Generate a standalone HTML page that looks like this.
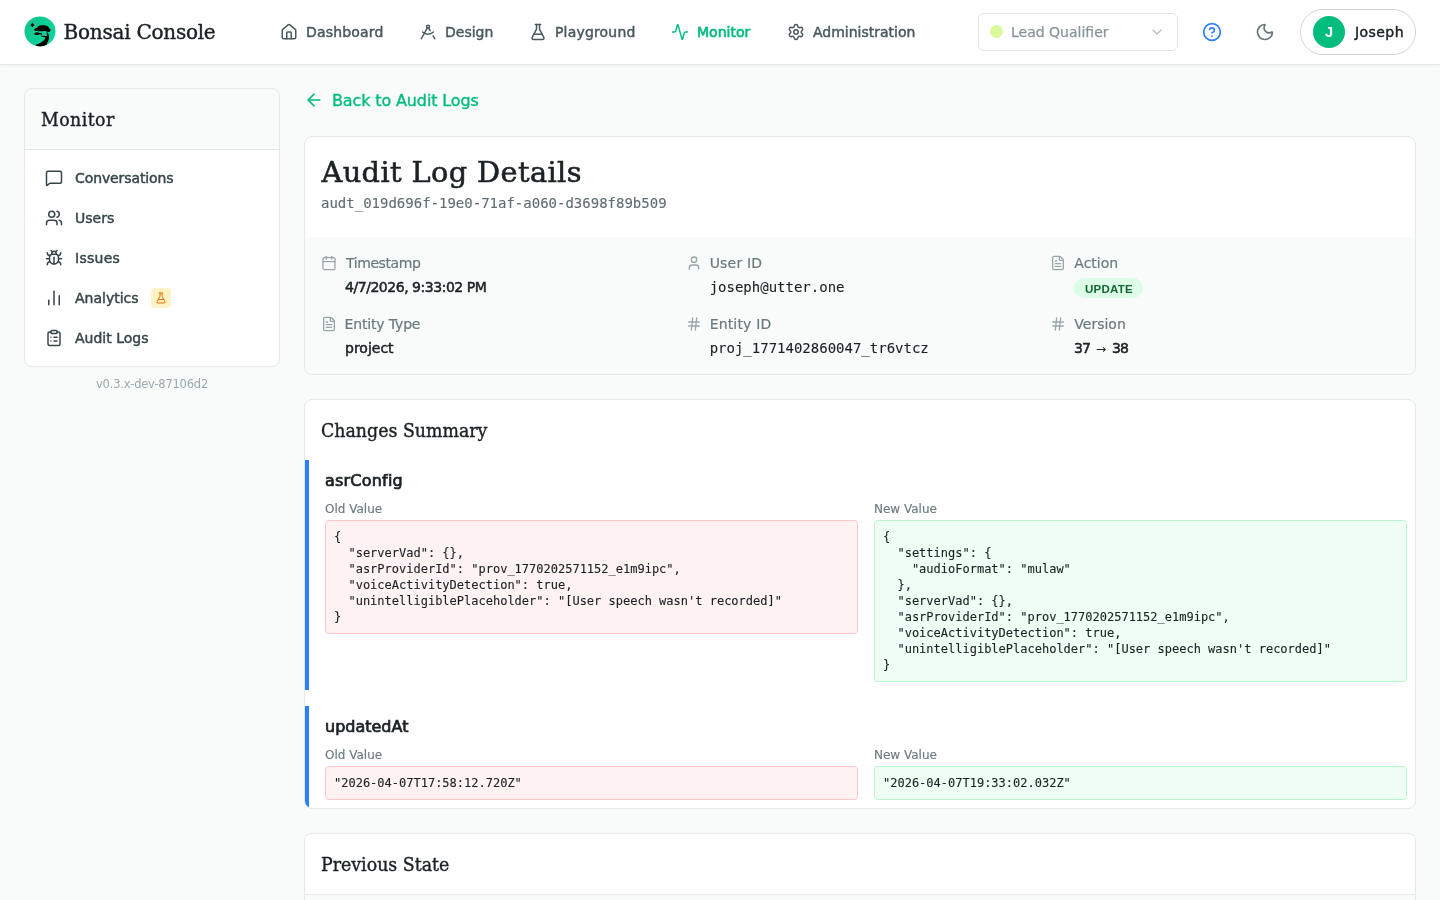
<!DOCTYPE html>
<html lang="en">
<head>
<meta charset="utf-8">
<title>Bonsai Console – Audit Log Details</title>
<style>
*{box-sizing:border-box;margin:0;padding:0}
html,body{width:1440px;height:900px;overflow:hidden;font-family:"DejaVu Sans","Liberation Sans",sans-serif}
body{background:#f9fbfb;font-family:"DejaVu Sans","Liberation Sans",sans-serif;color:#1b2124;position:relative;-webkit-font-smoothing:antialiased}
svg{display:block;fill:none;stroke:currentColor;stroke-width:2;stroke-linecap:round;stroke-linejoin:round}
#app{position:absolute;left:0;top:0;width:1440px;height:900px;overflow:hidden;will-change:transform;background:#f9fbfb}
.t{position:absolute;white-space:pre;line-height:20px}
.serif{-webkit-text-stroke:.4px currentColor;font-family:"DejaVu Serif","Liberation Serif",serif}
.mono{-webkit-text-stroke:.12px currentColor !important;font-family:"DejaVu Sans Mono","Liberation Mono",monospace}

/* header */
#hdr{position:absolute;left:0;top:0;width:1440px;height:65px;background:#fff;border-bottom:1px solid #e4e7e8;box-shadow:0 1px 2px rgba(16,24,40,.05)}
#logo{position:absolute;left:24px;top:16px;width:32px;height:32px}
#brand{left:63.6px;top:16px;font-size:20px;letter-spacing:-.25px;line-height:32px;color:#1b2124}
.nav{position:absolute;top:0;height:64px;color:#4a595d;font-size:14px}
.nav svg{position:absolute;left:0;top:23px;width:18px;height:18px}
.nav span{-webkit-text-stroke:.45px currentColor;font-size:13.500px;transform:scaleX(1.037);transform-origin:0 50%;position:absolute;left:26px;top:22px;line-height:20px;white-space:pre}
.nav.on{color:#00bc7d}
.nav.on span{-webkit-text-stroke:.6px currentColor}
#sel{position:absolute;left:978px;top:13px;width:200px;height:38px;border:1px solid #e1e5e8;border-radius:6px;background:#fff}
#sel i{position:absolute;left:11px;top:11px;width:13px;height:13px;border-radius:50%;background:#d9f99d}
#sel span{-webkit-text-stroke:.25px currentColor;transform:scaleX(1.03);transform-origin:0 50%;position:absolute;left:32px;top:8px;font-size:13.600px;line-height:20px;color:#8a9598;white-space:pre}
#sel svg{position:absolute;left:170px;top:10px;width:16px;height:16px;color:#b7c0c3;stroke-width:2}
#help{position:absolute;left:1202px;top:22px;width:20px;height:20px;color:#2b7fff}
#moon{position:absolute;left:1255px;top:22px;width:20px;height:20px;color:#66757a}
#user{position:absolute;left:1300px;top:9px;width:116px;height:46px;border:1px solid #d1d5dc;border-radius:23px;background:#fff}
#user b{position:absolute;left:12px;top:6px;width:32px;height:32px;border-radius:50%;background:#00bc7d;color:#fff;font-size:14.5px;line-height:33px;text-align:center;font-weight:700;font-family:'Liberation Sans',sans-serif}
#user>span{-webkit-text-stroke:.45px currentColor;transform:scaleX(1.037);transform-origin:0 50%;letter-spacing:.42px;position:absolute;left:54px;top:12px;font-size:13.500px;line-height:20px;color:#1b2124;white-space:pre}

/* sidebar */
#side{position:absolute;left:24px;top:88px;width:256px;height:279px;border:1px solid #e3e8e9;border-radius:8px;background:#fff;overflow:hidden}
#side .hd{height:61px;border-bottom:1px solid #e3e8e9;background:#f9fbfb;position:relative}
#side .hd span{position:absolute;left:15.500px;top:17px;font-size:18.400px;transform:scaleX(.945);transform-origin:0 50%;letter-spacing:.45px;line-height:28px;white-space:pre}
.si{position:absolute;left:8px;width:238px;height:40px;color:#374649;font-size:14px}
.si svg{position:absolute;left:12px;top:11px;width:18px;height:18px}
.si span{-webkit-text-stroke:.45px currentColor;font-size:13.500px;transform:scaleX(1.037);transform-origin:0 50%;position:absolute;left:42px;top:10px;line-height:20px;white-space:pre}
#beta{position:absolute;left:118px;top:10px;width:20px;height:20px;border-radius:4px;background:#fef3c6;color:#e17100}
#beta svg{left:4px;top:4px;width:12px;height:12px}
#ver{left:24px;top:374px;width:256px;text-align:center;font-size:11.500px;line-height:20px;color:#9ca8ab;letter-spacing:-.22px}

/* main */
#back{position:absolute;left:304px;top:89px;height:24px;color:#00bc7d;font-size:16px}
#back svg{position:absolute;left:0;top:1px;width:20px;height:20px}
#back span{-webkit-text-stroke:.35px currentColor;letter-spacing:-.12px;font-size:15.700px;transform:scaleX(1.019);transform-origin:0 50%;position:absolute;left:28.300px;top:0;line-height:24px;white-space:pre}
.card{position:absolute;left:304px;width:1112px;border:1px solid #e3e8e9;border-radius:8px;background:#fff;overflow:hidden}
#c1{top:136px;height:239px}
#c1 h1{-webkit-text-stroke:.6px currentColor;position:absolute;left:16.5px;top:16.5px;font-size:28.8px;letter-spacing:.38px;line-height:36px;font-weight:400;white-space:pre;color:#1b2124}
#c1 .id{position:absolute;left:16px;top:56px;font-size:14px;line-height:20px;color:#5f6d71;white-space:pre}
#meta{position:absolute;left:0;top:100px;width:1110px;height:137px;background:#f9fbfb;border-radius:8px}
.cell{position:absolute;width:348px;height:44px}
.cell svg{position:absolute;left:0;top:2px;width:16px;height:16px;color:#9aa6a9}
.cell .l{-webkit-text-stroke:.2px currentColor;position:absolute;left:24px;top:0;font-size:14px;line-height:20px;color:#6b7a7e;white-space:pre}
.cell .v{-webkit-text-stroke:.5px currentColor;position:absolute;left:24px;top:24px;font-size:14px;line-height:20px;color:#1b2124;white-space:pre}
.cell .s{font-size:13.500px;transform:scaleX(1.037);transform-origin:0 50%}
.badge{position:absolute;left:24px;top:25px;height:20px;width:69px;border-radius:10px;background:#dcfce7;color:#166534;font-size:11.5px;line-height:22px;letter-spacing:.25px;text-indent:.25px;text-align:center;font-weight:700;font-family:"Liberation Sans","DejaVu Sans",sans-serif}

#c2{top:399px;height:410px}
h2{position:absolute;left:16px;font-size:18.400px;transform:scaleX(.945);transform-origin:0 50%;line-height:28px;font-weight:400;white-space:pre;color:#1b2124}
.chg{position:absolute;left:0;width:1110px;border-left:4px solid #2b7fff}
.chg h3{-webkit-text-stroke:.7px currentColor;transform:scaleX(1.053);transform-origin:0 50%;position:absolute;left:16px;top:9px;font-size:15.200px;line-height:24px;font-weight:400;white-space:pre;color:#1b2124}
.chg .lb{-webkit-text-stroke:.15px currentColor;position:absolute;top:41px;font-size:12px;line-height:16px;color:#6b7a7e;white-space:pre}
.chg pre{position:absolute;top:60px;width:533px;border:1px solid;border-radius:3.500px;padding:8px;font-size:12px;line-height:16px;color:#1b2124;white-space:pre;overflow:hidden}
.old{left:16px}.new{left:565px}
pre.old{background:#fef2f2;border-color:#ffc9c9}
pre.new{background:#f0fdf4;border-color:#b9f8cf}
#c3{top:833px;height:200px;background:#f9fbfb}
#c3 .hd{position:absolute;left:0;top:0;width:1110px;height:61px;border-bottom:1px solid #e3e8e9;background:#fff}
</style>
</head>
<body>
<div id="app">
<div id="hdr">
  <svg id="logo" viewBox="0 0 32 32" style="stroke:none"><defs><linearGradient id="lg" x1="0" y1="0.2" x2="1" y2="0.8"><stop offset="0" stop-color="#14c38a"/><stop offset="1" stop-color="#06d8a2"/></linearGradient><clipPath id="lc"><ellipse cx="16" cy="15.600" rx="15.500" ry="15.100"/></clipPath></defs><ellipse cx="16" cy="15.400" rx="15.500" ry="14.900" fill="url(#lg)"/><g fill="#000" clip-path="url(#lc)"><path d="M8.400 6.500Q9.100 8.200 10.600 8.900Q9.100 9.600 8.400 11.300Q7.700 9.600 6.300 8.900Q7.700 8.200 8.400 6.500Z"/><path d="M10.200 13.600C11 12.400 12.500 11.800 13.500 11.500C13.600 10.200 15 9.500 17 9.300C19 9.100 22 9.200 23.500 10C24.600 10.600 24.900 11.500 25 12.300C26 12.800 26.800 13.500 26.700 14.200C26.500 15.500 25.500 16 24.300 15.900C23.500 15.500 22.500 15 21 14.900C18 15 15 15.200 13 15.100C11.500 15.100 9.900 14.800 10.200 13.600Z"/><path d="M10.200 17.800C10.800 16.800 12.200 16.100 13.400 16.200C14.200 16.600 15.500 17 16.900 17.100C17.800 17.300 18.400 17.800 18.100 18.500C17.500 19 16.500 18.300 15.600 18.200C14.800 18.400 14.300 18.900 13.500 19C12.400 19.200 10.600 19.300 10.200 17.800Z"/><path d="M22.400 15.500C23.800 16.600 24.700 18 25 20C25.200 21.800 25 23.500 24 25.200C23.400 26.300 23 27.300 22.800 28.500C20 30.800 14.500 31 11.300 29.200C13.500 28 16.500 27 18.500 25.500C20 24.300 21 23 21.800 21.500L17 20.400L17.300 19.800L22.800 19.900C23 18.500 22.900 17 22.400 15.500Z"/></g></svg>
  <span class="t serif" id="brand">Bonsai Console</span>
  <div class="nav" style="left:280px"><svg viewBox="0 0 24 24"><path d="M15 21v-8a1 1 0 0 0-1-1h-4a1 1 0 0 0-1 1v8"/><path d="M3 10a2 2 0 0 1 .709-1.528l7-5.999a2 2 0 0 1 2.582 0l7 5.999A2 2 0 0 1 21 10v9a2 2 0 0 1-2 2H5a2 2 0 0 1-2-2z"/></svg><span style="letter-spacing:.17px">Dashboard</span></div>
  <div class="nav" style="left:419px"><svg viewBox="0 0 24 24"><path d="m12.990 6.740 1.930 3.440"/><path d="M19.136 12a10 10 0 0 1-14.271 0"/><path d="m21 21-2.160-3.840"/><path d="m3 21 8.020-14.260"/><circle cx="12" cy="5" r="2"/></svg><span>Design</span></div>
  <div class="nav" style="left:529px"><svg viewBox="0 0 24 24"><path d="M14 2v6a2 2 0 0 0 .245.960l5.510 10.080A2 2 0 0 1 18 22H6a2 2 0 0 1-1.755-2.960l5.510-10.080A2 2 0 0 0 10 8V2"/><path d="M6.453 15h11.094"/><path d="M8.500 2h7"/></svg><span style="letter-spacing:.17px">Playground</span></div>
  <div class="nav on" style="left:671px"><svg viewBox="0 0 24 24"><path d="M22 12h-2.480a2 2 0 0 0-1.930 1.460l-2.350 8.360a.25.25 0 0 1-.480 0L9.240 2.180a.25.25 0 0 0-.480 0l-2.350 8.360A2 2 0 0 1 4.490 12H2"/></svg><span>Monitor</span></div>
  <div class="nav" style="left:787px"><svg viewBox="0 0 24 24"><path d="M9.671 4.136a2.340 2.340 0 0 1 4.659 0 2.340 2.340 0 0 0 3.319 1.915 2.340 2.340 0 0 1 2.330 4.033 2.340 2.340 0 0 0 0 3.831 2.340 2.340 0 0 1-2.330 4.033 2.340 2.340 0 0 0-3.319 1.915 2.340 2.340 0 0 1-4.659 0 2.340 2.340 0 0 0-3.320-1.915 2.340 2.340 0 0 1-2.330-4.033 2.340 2.340 0 0 0 0-3.831A2.340 2.340 0 0 1 6.350 6.051a2.340 2.340 0 0 0 3.319-1.915"/><circle cx="12" cy="12" r="3"/></svg><span>Administration</span></div>
  <div id="sel"><i></i><span>Lead Qualifier</span><svg viewBox="0 0 24 24"><path d="m6 9 6 6 6-6"/></svg></div>
  <svg id="help" viewBox="0 0 24 24"><circle cx="12" cy="12" r="10"/><path d="M9.090 9a3 3 0 0 1 5.830 1c0 2-3 3-3 3"/><path d="M12 17h.01"/></svg>
  <svg id="moon" viewBox="0 0 24 24"><path d="M20.985 12.486a9 9 0 1 1-9.473-9.472c.405-.022.617.460.402.803a6 6 0 0 0 8.268 8.268c.344-.215.825-.004.803.401"/></svg>
  <div id="user"><b>J</b><span>Joseph</span></div>
</div>

<div id="side">
  <div class="hd"><span class="serif">Monitor</span></div>
  <div class="si" style="top:69px"><svg viewBox="0 0 24 24"><path d="M22 17a2 2 0 0 1-2 2H6.828a2 2 0 0 0-1.414.586l-2.202 2.202A.71.71 0 0 1 2 21.286V5a2 2 0 0 1 2-2h16a2 2 0 0 1 2 2z"/></svg><span style="letter-spacing:-.1px">Conversations</span></div>
  <div class="si" style="top:109px"><svg viewBox="0 0 24 24"><path d="M16 21v-2a4 4 0 0 0-4-4H6a4 4 0 0 0-4 4v2"/><circle cx="9" cy="7" r="4"/><path d="M22 21v-2a4 4 0 0 0-3-3.870"/><path d="M16 3.130a4 4 0 0 1 0 7.750"/></svg><span>Users</span></div>
  <div class="si" style="top:149px"><svg viewBox="0 0 24 24"><path d="m8 2 1.880 1.880"/><path d="M14.120 3.880 16 2"/><path d="M9 7.130v-1a3.003 3.003 0 1 1 6 0v1"/><path d="M12 20c-3.300 0-6-2.700-6-6v-3a4 4 0 0 1 4-4h4a4 4 0 0 1 4 4v3c0 3.300-2.700 6-6 6"/><path d="M12 20v-9"/><path d="M6.530 9C4.600 8.800 3 7.100 3 5"/><path d="M6 13H2"/><path d="M3 21c0-2.100 1.700-3.900 3.800-4"/><path d="M20.970 5c0 2.100-1.600 3.800-3.500 4"/><path d="M22 13h-4"/><path d="M17.200 17c2.100.1 3.800 1.900 3.800 4"/></svg><span style="letter-spacing:.25px">Issues</span></div>
  <div class="si" style="top:189px"><svg viewBox="0 0 24 24"><path d="M5 21v-6"/><path d="M12 21V3"/><path d="M19 21V9"/></svg><span>Analytics</span><div id="beta"><svg viewBox="0 0 24 24"><path d="M14 2v6a2 2 0 0 0 .245.960l5.510 10.080A2 2 0 0 1 18 22H6a2 2 0 0 1-1.755-2.960l5.510-10.080A2 2 0 0 0 10 8V2"/><path d="M6.453 15h11.094"/><path d="M8.500 2h7"/></svg></div></div>
  <div class="si" style="top:229px"><svg viewBox="0 0 24 24"><rect width="8" height="4" x="8" y="2" rx="1" ry="1"/><path d="M16 4h2a2 2 0 0 1 2 2v14a2 2 0 0 1-2 2H6a2 2 0 0 1-2-2V6a2 2 0 0 1 2-2h2"/><path d="M12 11h4"/><path d="M12 16h4"/><path d="M8 11h.01"/><path d="M8 16h.01"/></svg><span>Audit Logs</span></div>
</div>
<span class="t" id="ver">v0.3.x-dev-87106d2</span>

<div id="back"><svg viewBox="0 0 24 24"><path d="m12 19-7-7 7-7"/><path d="M19 12H5"/></svg><span>Back to Audit Logs</span></div>

<div class="card" id="c1">
  <h1 class="serif">Audit Log Details</h1>
  <div class="id mono">audt_019d696f-19e0-71af-a060-d3698f89b509</div>
  <div id="meta">
    <div class="cell" style="left:16px;top:16px"><svg viewBox="0 0 24 24"><path d="M8 2v4"/><path d="M16 2v4"/><rect width="18" height="18" x="3" y="4" rx="2"/><path d="M3 10h18"/></svg><span class="l" style="letter-spacing:-.42px;left:25px">Timestamp</span><span class="v s" style="letter-spacing:-.45px">4/7/2026, 9:33:02 PM</span></div>
    <div class="cell" style="left:380.67px;top:16px"><svg viewBox="0 0 24 24"><path d="M19 21v-2a4 4 0 0 0-4-4H9a4 4 0 0 0-4 4v2"/><circle cx="12" cy="7" r="4"/></svg><span class="l" style="letter-spacing:.2px">User ID</span><span class="v mono">joseph@utter.one</span></div>
    <div class="cell" style="left:745.33px;top:16px"><svg viewBox="0 0 24 24"><path d="M6 22a2 2 0 0 1-2-2V4a2 2 0 0 1 2-2h8a2.400 2.400 0 0 1 1.704.706l3.588 3.588A2.400 2.400 0 0 1 20 8v12a2 2 0 0 1-2 2z"/><path d="M14 2v5a1 1 0 0 0 1 1h5"/><path d="M10 9H8"/><path d="M16 13H8"/><path d="M16 17H8"/></svg><span class="l">Action</span><span class="badge">UPDATE</span></div>
    <div class="cell" style="left:16px;top:77px"><svg viewBox="0 0 24 24"><path d="M6 22a2 2 0 0 1-2-2V4a2 2 0 0 1 2-2h8a2.400 2.400 0 0 1 1.704.706l3.588 3.588A2.400 2.400 0 0 1 20 8v12a2 2 0 0 1-2 2z"/><path d="M14 2v5a1 1 0 0 0 1 1h5"/><path d="M10 9H8"/><path d="M16 13H8"/><path d="M16 17H8"/></svg><span class="l" style="letter-spacing:-.15px;left:23.5px">Entity Type</span><span class="v s">project</span></div>
    <div class="cell" style="left:380.67px;top:77px"><svg viewBox="0 0 24 24"><path d="M4 9h16"/><path d="M4 15h16"/><path d="M10 3 8 21"/><path d="M16 3l-2 18"/></svg><span class="l" style="letter-spacing:.17px">Entity ID</span><span class="v mono">proj_1771402860047_tr6vtcz</span></div>
    <div class="cell" style="left:745.33px;top:77px"><svg viewBox="0 0 24 24"><path d="M4 9h16"/><path d="M4 15h16"/><path d="M10 3 8 21"/><path d="M16 3l-2 18"/></svg><span class="l">Version</span><span class="v s" style="letter-spacing:-.9px;word-spacing:2.2px">37 <span style="-webkit-text-stroke:0;font-size:12px;letter-spacing:0">→</span> 38</span></div>
  </div>
</div>

<div class="card" id="c2">
  <h2 class="serif" style="top:16.500px;letter-spacing:0">Changes Summary</h2>
  <div class="chg" style="top:60px;height:230px">
    <h3 style="letter-spacing:.2px">asrConfig</h3>
    <span class="lb old">Old Value</span><span class="lb new">New Value</span>
<pre class="old mono">{
  "serverVad": {},
  "asrProviderId": "prov_1770202571152_e1m9ipc",
  "voiceActivityDetection": true,
  "unintelligiblePlaceholder": "[User speech wasn't recorded]"
}</pre>
<pre class="new mono">{
  "settings": {
    "audioFormat": "mulaw"
  },
  "serverVad": {},
  "asrProviderId": "prov_1770202571152_e1m9ipc",
  "voiceActivityDetection": true,
  "unintelligiblePlaceholder": "[User speech wasn't recorded]"
}</pre>
  </div>
  <div class="chg" style="top:306px;height:103px">
    <h3>updatedAt</h3>
    <span class="lb old">Old Value</span><span class="lb new">New Value</span>
<pre class="old mono">"2026-04-07T17:58:12.720Z"</pre>
<pre class="new mono">"2026-04-07T19:33:02.032Z"</pre>
  </div>
</div>

<div class="card" id="c3">
  <div class="hd"><h2 class="serif" style="top:16.500px;letter-spacing:0">Previous State</h2></div>
</div>
</div>
</body>
</html>
